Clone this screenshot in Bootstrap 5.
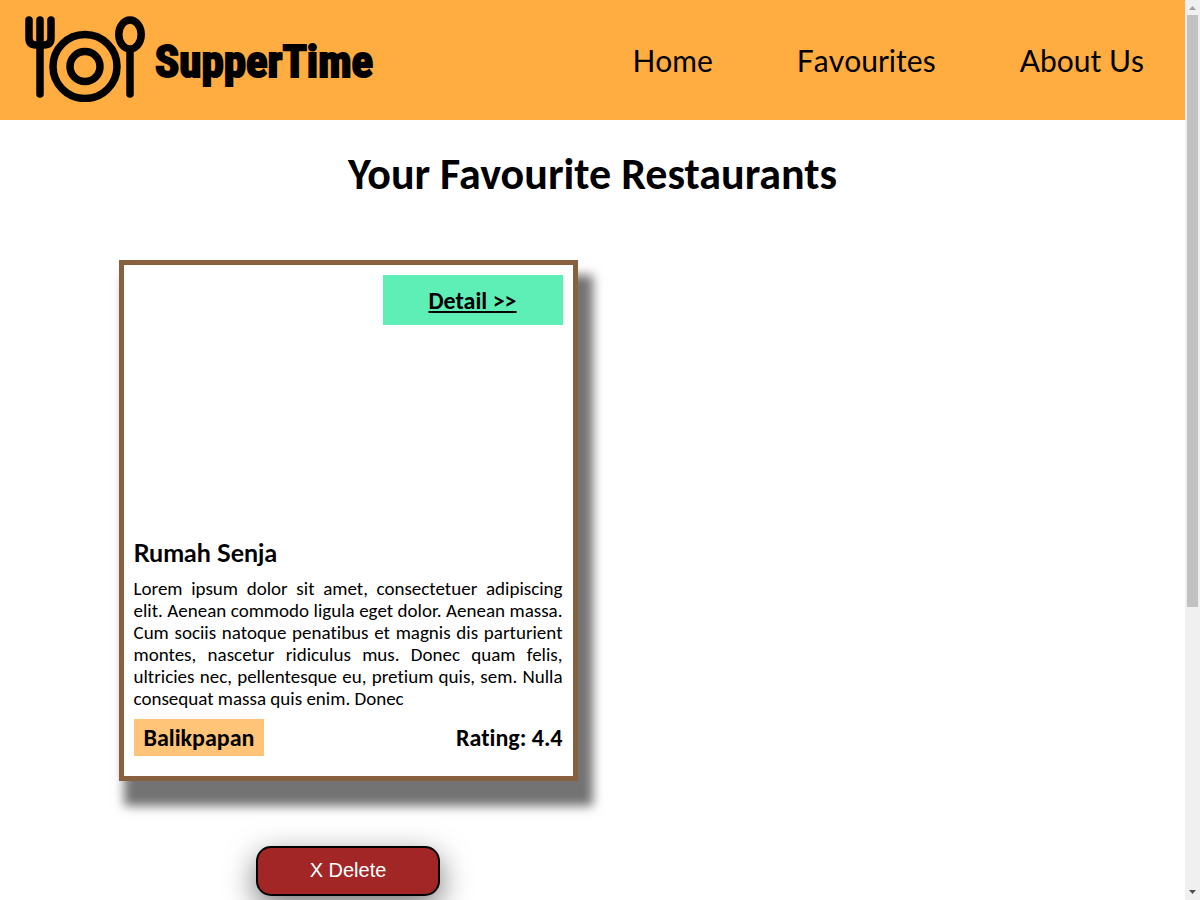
<!DOCTYPE html>
<html lang="en">
<head>
<meta charset="utf-8">
<meta name="viewport" content="width=device-width, initial-scale=1">
<title>SupperTime</title>
<link href="https://cdn.jsdelivr.net/npm/bootstrap@5.3.0/dist/css/bootstrap.min.css" rel="stylesheet">
<style>
  body { font-family: Carlito, Lato, sans-serif; font-variant-ligatures: none; color: #000; background: #fff; }
  .site-header { background: #ffac40; min-height: 120px; padding: 0 41px 2px 25px; }
  .brand-icon { width: 120px; height: 86px; }
  .brand-name { font: bold 45px/56px "Roboto Condensed", Roboto, sans-serif; -webkit-text-stroke: 2px #000; padding: 6px 0 0 2px; }
  .site-nav { gap: 84px; font: 30px/40px Lato, sans-serif; font-kerning: none; padding-top: 2px; }
  .page-title { font-size: 44px; line-height: 48px; font-weight: 700; margin: 30px 0 62px; }
  .restaurants { display: grid; grid-template-columns: 1fr 1fr; gap: 30px; width: 80%; }
  .resto-card { border: 5px solid #87613f; padding: 10px 10px 20px; box-shadow: 10px 20px 10px 5px #737373; background: #fff; }
  .photo { height: 262px; }
  .detail-link { width: 180px; height: 50px; background: #5eefb7; font-size: 24px; font-weight: 700; padding-top: 2px; }
  .resto-name { font: 700 25px/30px Lato, sans-serif; margin: 0 0 11px; }
  .resto-text { font-size: 19px; line-height: 22px; text-align: justify; margin: 0 0 9px; }
  .resto-meta { font-size: 24px; line-height: 27px; font-weight: 700; }
  .city { background: #ffc477; padding: 5px 10px; }
  .delete-btn { width: 184px; height: 50px; margin-top: 65px; border: 2px solid #000; border-radius: 15px; background: #a22626; color: #fff; font: 20px/24px "Liberation Sans", Arial, sans-serif; padding: 0 0 3px; box-shadow: 0 10px 30px rgba(0,0,0,.55); }
  .scroll-rail { width: 15px; background: #f0f0f0; }
  .scroll-rail svg { width: 15px; height: 15px; }
  .scroll-thumb { width: 11px; height: calc((100% - 30px) * .68); background: #c1c1c1; }
</style>
</head>
<body>
<div class="d-flex vh-100 overflow-hidden">
  <div class="flex-grow-1 overflow-hidden">
    <header class="site-header d-flex align-items-center justify-content-between">
      <a href="#" class="d-flex align-items-center text-black text-decoration-none">
        <svg class="brand-icon me-2" viewBox="0 0 120 86" fill="none" stroke="#000" stroke-width="7.5" stroke-linecap="round" stroke-linejoin="round" aria-hidden="true">
          <path d="M4 4V22Q4 29 11 29H19Q26 29 26 22V4M15 4V78"/>
          <circle cx="60" cy="50.500" r="32"/>
          <circle cx="60" cy="50.500" r="15"/>
          <ellipse cx="105" cy="18.500" rx="11.200" ry="14.500"/>
          <path d="M105 35V78"/>
        </svg>
        <span class="brand-name">SupperTime</span>
      </a>
      <nav class="site-nav d-flex">
        <a href="#" class="text-black text-decoration-none">Home</a>
        <a href="#" class="text-black text-decoration-none">Favourites</a>
        <a href="#" class="text-black text-decoration-none">About Us</a>
      </nav>
    </header>
    <main>
      <h1 class="page-title text-center">Your Favourite Restaurants</h1>
      <div class="restaurants mx-auto">
        <div class="text-center">
          <article class="resto-card text-start">
            <div class="photo d-flex justify-content-end align-items-start">
              <a href="#" class="detail-link d-flex align-items-center justify-content-center text-black">Detail &gt;&gt;</a>
            </div>
            <h2 class="resto-name">Rumah Senja</h2>
            <p class="resto-text">Lorem ipsum dolor sit amet, consectetuer adipiscing elit. Aenean commodo ligula eget dolor. Aenean massa. Cum sociis natoque penatibus et magnis dis parturient montes, nascetur ridiculus mus. Donec quam felis, ultricies nec, pellentesque eu, pretium quis, sem. Nulla consequat massa quis enim. Donec</p>
            <div class="resto-meta d-flex justify-content-between align-items-center">
              <span class="city">Balikpapan</span>
              <span>Rating: 4.4</span>
            </div>
          </article>
          <button type="button" class="delete-btn">X Delete</button>
        </div>
      </div>
    </main>
  </div>
  <div class="scroll-rail d-flex flex-column align-items-center flex-shrink-0" aria-hidden="true">
    <svg viewBox="0 0 15 15"><path d="M4 10L7.500 6L11 10Z" fill="#a0a0a0"/></svg>
    <div class="scroll-thumb mb-auto"></div>
    <svg viewBox="0 0 15 15"><path d="M4 5H11L7.500 9Z" fill="#505050"/></svg>
  </div>
</div>
<script src="https://cdn.jsdelivr.net/npm/bootstrap@5.3.0/dist/js/bootstrap.bundle.min.js"></script>
</body>
</html>
